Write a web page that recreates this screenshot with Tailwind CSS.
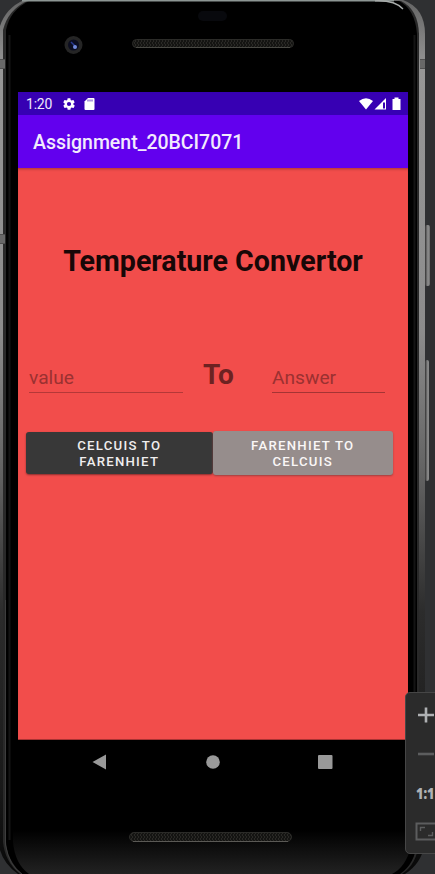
<!DOCTYPE html>
<html lang="en">
<head>
<meta charset="utf-8">
<title>Temperature Convertor</title>
<script src="https://cdn.jsdelivr.net/npm/@tailwindcss/browser@4"></script>
</head>
<body class="bg-[#2f3032]">
<main class="relative w-[435px] h-[874px] overflow-hidden bg-[#2f3032] font-['Roboto',sans-serif]">
  <!-- Phone body -->
  <svg class="absolute inset-0" width="435" height="874" viewBox="0 0 435 874" fill="none">
    <defs>
      <linearGradient id="rim" x1="0" y1="0" x2="0" y2="874" gradientUnits="userSpaceOnUse">
        <stop offset="0" stop-color="#656565"/><stop offset=".08" stop-color="#979797"/><stop offset=".38" stop-color="#8c8c8c"/><stop offset=".55" stop-color="#606060"/><stop offset=".7" stop-color="#2c2c2c"/><stop offset=".9" stop-color="#191919"/><stop offset="1" stop-color="#080808"/>
      </linearGradient>
      <linearGradient id="base" x1="0" y1="830" x2="0" y2="874" gradientUnits="userSpaceOnUse">
        <stop offset="0" stop-color="#000"/><stop offset="1" stop-color="#222"/>
      </linearGradient>
      <pattern id="mesh" width="3" height="4" patternUnits="userSpaceOnUse">
        <path d="M0 0h3v4H0z" fill="#141412"/><path d="M0 0h1v2H0zM2 2h1v2H2z" fill="#2a2926"/>
      </pattern>
      <linearGradient id="key" x1="425" y1="0" x2="431" y2="0" gradientUnits="userSpaceOnUse">
        <stop offset="0" stop-color="#333"/><stop offset=".5" stop-color="#929292"/><stop offset="1" stop-color="#555"/>
      </linearGradient>
    </defs>
    <rect x="425" y="225" width="5" height="61" rx="2" fill="url(#key)"/>
    <rect x="425" y="360" width="4" height="121" rx="2" fill="url(#key)"/>
    <path d="M0 26Q6 8 24 0H403Q425 8 425 34V844Q421 864 405 874H18Q4 864 0 850Z" fill="url(#rim)"/>
    <path d="M3 30Q8 10 27 1H401Q418 9 419 34V842Q417 864 402 874H20Q5 862 3 842Z" fill="#292929"/>
    <path d="M6 30Q10 10 29 1H399Q415 9 417 34V842Q415 864 400 874H22Q7 860 6 842Z" fill="#000"/>
    <path d="M13 830H411V846Q406 867 392 874H29Q15 864 13 842Z" fill="url(#base)"/>
    <path d="M9.500 35V840M414.500 35V840" stroke="#141414" stroke-width="2"/>
    <path d="M5.500 600V845Q9 866 22 874" stroke="#3d3d3d"/>
    <path d="M22 .6H394" stroke="#8d9694" stroke-width="1.600"/>
    <path d="M375 .8Q395 0 403 9" stroke="#a9adac" stroke-width="1.300"/>
    <path d="M0 59h5v10H0zM420 59h5v10h-5zM0 234h5v10H0z" fill="#686868"/>
    <path d="M0 59.500h5M0 68.500h5M420 59.500h5M420 68.500h5M0 234.500h5M0 243.500h5" stroke="#505050"/>
    <rect x="198" y="11" width="29" height="10" rx="5" fill="#08090d"/>
    <circle cx="73.500" cy="45" r="9" fill="#252525"/>
    <circle cx="73.500" cy="45" r="5.500" fill="#0b0d20"/>
    <path d="M71 42l4 4" stroke="#283a91" stroke-width="1.500"/>
    <circle cx="75" cy="47" r="2" fill="#7189dc"/>
    <rect x="132.500" y="39.500" width="161" height="8" rx="4" fill="url(#mesh)" stroke="#2b2b28"/>
    <path d="M136 47.500h154" stroke="#4a4a45"/>
    <rect x="129.500" y="832.500" width="162" height="9" rx="4.500" fill="url(#mesh)" stroke="#2b2b28"/>
    <path d="M133 841.500h155" stroke="#5a5955"/>
  </svg>

  <!-- Device display -->
  <section class="relative ml-[18px] pt-[92px] w-[390px]">
    <header>
      <div class="flex h-[23px] items-center bg-[#3700b3] pl-2 pr-[7px] text-[#eee8fa]">
        <span class="w-[36px] text-[14px] leading-[23px] tracking-[-.2px] pt-px">1:20</span>
        <svg class="shrink-0" width="14" height="14" viewBox="0 0 24 24" fill="white"><path d="M19.4 13a7.800 7.800 0 0 0 0-2l2.100-1.600a.5.5 0 0 0 .1-.6l-2-3.500a.5.5 0 0 0-.6-.2l-2.500 1a7 7 0 0 0-1.700-1L14.500 2.400A.5.500 0 0 0 14 2h-4a.5.500 0 0 0-.5.400l-.4 2.700a7 7 0 0 0-1.700 1l-2.500-1a.5.500 0 0 0-.6.200l-2 3.500a.5.500 0 0 0 .1.600L4.600 11a7.800 7.800 0 0 0 0 2l-2.100 1.600a.5.500 0 0 0-.1.600l2 3.500c.1.200.4.300.6.200l2.500-1a7 7 0 0 0 1.700 1l.4 2.700c0 .2.200.4.5.4h4c.2 0 .5-.2.500-.4l.4-2.700a7 7 0 0 0 1.700-1l2.500 1c.2.100.5 0 .6-.2l2-3.500a.5.500 0 0 0-.1-.6zM12 15.600a3.600 3.600 0 1 1 0-7.200 3.600 3.600 0 0 1 0 7.200z"/></svg>
        <svg class="ml-[8px] shrink-0" width="12" height="14" viewBox="0 0 12 14"><path d="M4 1H9.500q1 0 1 1v10q0 1-1 1H1.500q-1 0-1-1V4.500Z" fill="white"/><path d="M4 2.500v2M6 2.500v2M8 2.500v2" stroke="#3700b3" stroke-width=".8"/></svg>
        <svg class="ml-auto shrink-0" width="43" height="14" viewBox="0 0 43 14"><path d="M1 4Q8 -1.500 15 4L8 12.500Z" fill="white"/><path d="M16.500 12.500 28 1v11.500Z" fill="white"/><path d="M25 5.500h2v6h-2z" fill="#3700b3"/><path d="M34.500 2h2V.5h4V2h2v11h-8Z" fill="white"/></svg>
      </div>
      <div class="flex h-[53px] items-center bg-[#6200ee] px-[15px]">
        <h1 class="whitespace-nowrap pt-[2px] text-[19.500px] font-medium leading-[26px] text-[#f2eafd]">Assignment_20BCI7071</h1>
      </div>
    </header>

    <div class="h-[572px] border-b border-[#a93333] bg-[#f24d4b] pt-[73px] shadow-[inset_0_3px_3px_-2px_#a83535]">
      <h2 class="whitespace-nowrap text-center text-[28.600px] font-bold leading-[40px] text-[#180707]">Temperature Convertor</h2>
      <div class="mt-[71px] flex items-start pl-[11px]">
        <div class="h-[41px] w-[154px] border-b-[1.500px] border-[#b53838] pt-[12px] text-[19.200px] leading-[27px] text-[#9b3131]">value</div>
        <div class="ml-[20px] w-[69px] text-[28px] font-bold leading-[46px] text-[#6d2222]">To</div>
        <div class="h-[41px] w-[113px] border-b-[1.500px] border-[#a53434] pt-[12px] text-[19.200px] leading-[27px] text-[#9b3131]">Answer</div>
      </div>
      <div class="mt-[33px] flex items-center pl-2">
        <button class="h-[42px] w-[186.500px] rounded-[3px] bg-[#383838] pt-px text-center text-[13.200px] font-medium leading-[15.500px] tracking-[1.250px] text-[#f0eeee] shadow-[0_1px_2px_#852e2e]">CELCUIS TO<br>FARENHIET</button>
        <button class="h-[44px] w-[180.500px] rounded-[3px] bg-[#968d8c] pt-px text-center text-[13.200px] font-medium leading-[15.500px] tracking-[1.250px] text-[#faf7f7] shadow-[0_1px_2px_#9c4141]">FARENHIET TO<br>CELCUIS</button>
      </div>
    </div>
    <nav class="flex h-[43px] items-center bg-black pl-[73px]">
      <svg width="244" height="18" viewBox="0 0 244 18" fill="#999"><path d="M1.500 9 15 1.500v15Z"/><circle cx="122" cy="9" r="6.800"/><rect x="227" y="2" width="14.500" height="14" rx="1"/></svg>
    </nav>
  </section>

  <!-- Floating zoom controls -->
  <aside class="absolute left-[405px] top-[692px] flex h-[162px] w-[40px] flex-col items-start rounded-[5px] border border-[#464646] bg-[#2b2b2b] pl-[9px] text-[#afb1b3]">
    <svg class="mt-[13px]" width="24" height="18" viewBox="0 0 24 18"><path d="M3 9h16M11 1.500v15" stroke="#afb1b3" stroke-width="2.600"/></svg>
    <svg class="mt-[21px]" width="24" height="18" viewBox="0 0 24 18"><path d="M3 9h16" stroke="#5c5d5e" stroke-width="2.600"/></svg>
    <svg class="mt-[21px]" width="20" height="18" viewBox="0 0 20 18" role="img" aria-label="Actual size"><text x="1" y="14.500" fill="#afb1b3" font-family="Open Sans" font-size="16.500" font-weight="800" textLength="18.500" lengthAdjust="spacingAndGlyphs">1:1</text></svg>
    <svg class="mt-[20px]" width="24" height="20" viewBox="0 0 24 20" fill="none" stroke="#5c5d5e"><path d="M1.500 1.500h20v16h-20z" stroke-width="2"/><path d="M5.500 9V5.500H10M13 13.500h4.500V10" stroke-width="1.400"/></svg>
  </aside>
</main>
</body>
</html>
